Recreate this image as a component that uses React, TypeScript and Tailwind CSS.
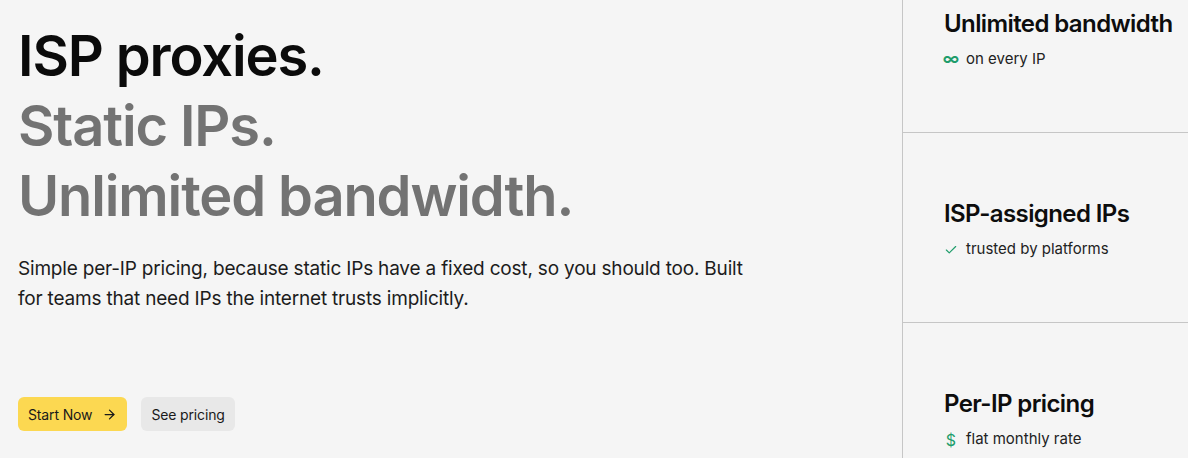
import { ArrowRight, Check } from 'lucide-react';

const FONT = { fontFamily: 'Inter, "Noto Sans", sans-serif' };

const features = [
  { title: 'Unlimited bandwidth', note: 'on every IP', icon: 'inf' },
  { title: 'ISP-assigned IPs', note: 'trusted by platforms', icon: 'check' },
  { title: 'Per-IP pricing', note: 'flat monthly rate', icon: 'dollar' },
];

function FeatureIcon({ kind }: { kind: string }) {
  if (kind === 'check') return <Check className="w-[14px] h-[14px] text-[#1f9d6b]" strokeWidth={2} />;
  if (kind === 'dollar') return <span className="text-[16px] leading-none text-[#1f9d6b]">$</span>;
  return <span className="text-[17px] leading-none text-[#1f9d6b] font-semibold">∞</span>;
}

export default function App() {
  return (
    <div className="w-full h-[458px] overflow-hidden bg-[#f5f5f5] text-[#111]" style={FONT}>
      <div className="flex h-full">
        {/* hero copy */}
        <div className="flex-1 pl-[18px] pt-[21px]">
          <h1 className="text-[56px] leading-[70px] font-semibold tracking-[-0.02em]">
            <span className="block text-[#0b0b0b]">ISP proxies.</span>
            <span className="block text-[#737373]">Static IPs.</span>
            <span className="block text-[#737373]">Unlimited bandwidth.</span>
          </h1>
          <p className="mt-[23px] max-w-[752px] text-[19px] leading-[30px] text-[#1c1c1c] tracking-[-0.01em]">
            Simple per-IP pricing, because static IPs have a fixed cost, so you should too. Built for teams that need IPs the internet trusts implicitly.
          </p>
          <div className="mt-[83px] flex items-center gap-[14px]">
            <button className="h-[34px] px-[10px] rounded-md bg-[#fcd851] text-[14px] text-[#1a1a1a] flex items-center gap-[10px] tracking-[-0.01em]">
              Start Now <ArrowRight className="w-[15px] h-[15px]" strokeWidth={2} />
            </button>
            <button className="h-[34px] px-[10px] rounded-md bg-[#e8e8e8] text-[14px] text-[#1a1a1a] tracking-[-0.01em]">
              See pricing
            </button>
          </div>
        </div>

        {/* feature column */}
        <div className="w-[286px] border-l border-[#c6c6c6] -mt-[57px]">
          {features.map((f) => (
            <div key={f.title} className="h-[190px] border-b border-[#c6c6c6] pl-[41px] pt-[5px] flex flex-col justify-center">
              <h3 className="text-[24px] leading-[30px] font-semibold tracking-[-0.025em] text-[#0d0d0d]">{f.title}</h3>
              <div className="mt-[9px] flex items-center gap-[8px] text-[15px] text-[#222]">
                <span className="w-[14px] flex justify-center"><FeatureIcon kind={f.icon} /></span>
                {f.note}
              </div>
            </div>
          ))}
        </div>
      </div>
    </div>
  );
}
